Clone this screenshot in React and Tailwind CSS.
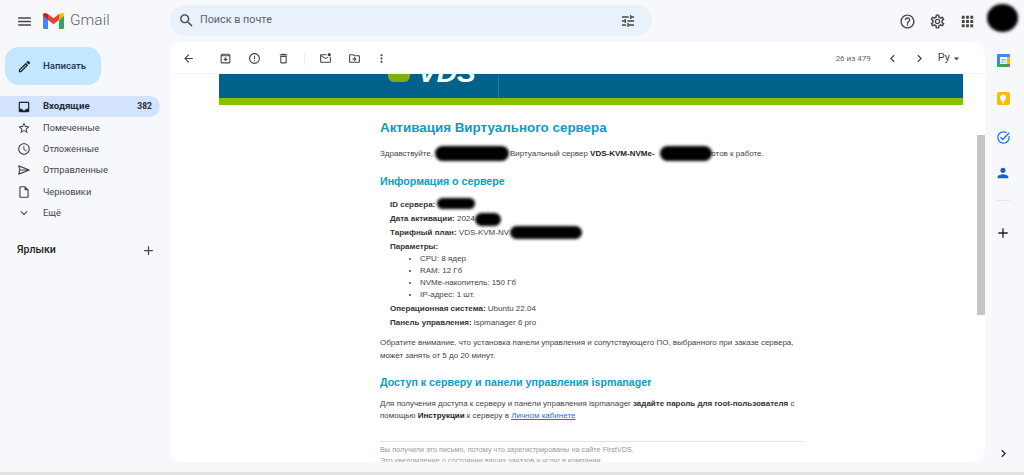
import {
  MdMenu, MdSearch, MdOutlineTune, MdHelpOutline, MdOutlineSettings, MdApps, MdOutlineEdit, MdInbox,
  MdStarBorder, MdOutlineWatchLater, MdOutlineInsertDriveFile, MdExpandMore, MdAdd,
  MdArrowBack, MdOutlineArchive, MdErrorOutline, MdOutlineDelete, MdOutlineMarkEmailUnread,
  MdOutlineDriveFileMove, MdMoreVert, MdChevronLeft, MdChevronRight, MdArrowDropDown, MdPerson,
  MdLightbulb, MdTaskAlt,
} from "react-icons/md";

const SentIcon = ({ size }) => (
  <svg width={size} height={size} viewBox="0 0 24 24" fill="none" stroke="currentColor" strokeWidth="2" strokeLinejoin="round">
    <path d="M3 5l18 7-18 7 2-7ZM5 12h16" />
  </svg>
);

const navItems = [
  { label: "Помеченные", Icon: MdStarBorder },
  { label: "Отложенные", Icon: MdOutlineWatchLater },
  { label: "Отправленные", Icon: SentIcon },
  { label: "Черновики", Icon: MdOutlineInsertDriveFile },
  { label: "Ещё", Icon: MdExpandMore },
];

const GmailLogo = () => (
  <svg width="21" height="16" viewBox="0 0 21 16">
    <path d="M0 2.5V14.5A1.5 1.5 0 0 0 1.5 16H5V7Z" fill="#4285f4" />
    <path d="M16 16H19.5A1.5 1.5 0 0 0 21 14.5V2.5L16 7Z" fill="#34a853" />
    <path d="M16 1V7L21 3V2C21 .2 19 -.6 17.6 .4Z" fill="#fbbc04" />
    <path d="M5 7V1L10.5 5.2 16 1V7L10.5 11.2Z" fill="#ea4335" />
    <path d="M0 2V3L5 7V1L3.4 .4C2 -.6 0 .2 0 2Z" fill="#c5221f" />
  </svg>
);

const CalendarIcon = () => (
  <svg width="13" height="13" viewBox="0 0 13 13">
    <rect width="13" height="13" rx="1" fill="#4285f4" />
    <rect x="3" y="3" width="7" height="7" fill="#fff" />
    <rect x="10" y="3" width="3" height="7" fill="#fbbc04" />
    <rect y="10" width="10" height="3" fill="#34a853" />
    <path d="M10 10h3l-3 3Z" fill="#ea4335" />
    <text x="6.5" y="8.6" fontSize="5" textAnchor="middle" fill="#1a73e8" fontFamily="Roboto, sans-serif">31</text>
  </svg>
);

const Blob = ({ className }) => (
  <span className={`absolute bg-black rounded-full blur-[1.5px] ${className}`} />
);

const Sidebar = () => (
  <aside className="w-[170px] shrink-0 pt-[5px]">
    <div className="ml-[5px] w-[96px] h-[38px] rounded-[14px] bg-[#c2e7ff] flex items-center pl-[12px] gap-[11px] text-[#17324d]">
      <MdOutlineEdit size={15} className="text-[#202124]" />
      <span className="text-[9.6px] font-medium">Написать</span>
    </div>
    <div className="mt-[11px] w-[160px] h-[21px] rounded-r-full bg-[#d3e3fd] flex items-center pl-[17px] pr-[8px] text-[9.6px] font-bold text-[#1f2b3a]">
      <MdInbox size={14} className="text-[#202124]" />
      <span className="ml-[12px] flex-1">Входящие</span>
      <span className="text-[8.5px]">382</span>
    </div>
    {navItems.map(({ label, Icon }) => (
      <div key={label} className="h-[21.3px] flex items-center pl-[17px] text-[9.3px] text-[#444746]">
        <Icon size={14} />
        <span className="ml-[12px]">{label}</span>
      </div>
    ))}
    <div className="mt-[19px] pl-[17px] pr-[14px] flex items-center justify-between text-[#1f1f1f]">
      <span className="text-[10.6px] font-medium">Ярлыки</span>
      <MdAdd size={15} className="text-[#444746]" />
    </div>
  </aside>
);

const Email = () => (
  <div className="flex-1 min-h-0 overflow-hidden relative font-['Liberation_Sans',sans-serif] text-[8px] leading-[14px] text-[#444]">
    <div className="ml-[49px] w-[744px] h-[31px] bg-[#00618a] border-b-[7px] border-[#84c200] overflow-hidden flex">
      <div className="w-[280px] relative border-r border-[#1c7ba3]">
        <span className="absolute left-[169px] -top-[12px] w-[22px] h-[20px] rounded-[6px] bg-[#7fae10]" />
        <span className="absolute left-[199px] -top-[15px] text-white text-[28px] leading-[28px] font-bold italic">VDS</span>
      </div>
    </div>
    <div className="ml-[210px] w-[424px]">
      <h1 className="mt-[14px] text-[13.4px] leading-[18px] font-bold text-[#0a9cc4]">Активация Виртуального сервера</h1>
      <p className="mt-[10px] relative">
        Здравствуйте,<span className="inline-block w-[77px]" />Виртуальный сервер <b className="text-[#222]">VDS-KVM-NVMe-</b>
        <span className="inline-block w-[54px]" />готов к работе.
        <Blob className="left-[55px] -top-[1px] w-[74px] h-[15px]" />
        <Blob className="left-[280px] -top-[1px] w-[52px] h-[15px]" />
      </p>
      <h2 className="mt-[12px] text-[10.66px] leading-[16px] font-bold text-[#0a9cc4]">Информация о сервере</h2>
      <div className="ml-[10px] mt-[9px] text-[#444]">
        <p className="relative"><b className="text-[#333]">ID сервера:</b><Blob className="left-[47px] top-0 w-[38px] h-[11px]" /></p>
        <p className="relative"><b className="text-[#333]">Дата активации:</b> 2024<Blob className="left-[85px] top-[1px] w-[26px] h-[13px]" /></p>
        <p className="relative"><b className="text-[#333]">Тарифный план:</b> VDS-KVM-NV<Blob className="left-[120px] top-0 w-[72px] h-[13px]" /></p>
        <p className="leading-[13px]"><b className="text-[#333]">Параметры:</b></p>
        <ul className="ml-[30px] list-disc leading-[12px]">
          <li>CPU: 8 ядер</li>
          <li>RAM: 12 Гб</li>
          <li>NVMe-накопитель: 150 Гб</li>
          <li>IP-адрес: 1 шт.</li>
        </ul>
        <p className="mt-[1px]"><b className="text-[#333]">Операционная система:</b> Ubuntu 22.04</p>
        <p><b className="text-[#333]">Панель управления:</b> ispmanager 6 pro</p>
      </div>
      <p className="mt-[6px] leading-[13px]">Обратите внимание, что установка панели управления и сопутствующего ПО, выбранного при заказе сервера, может занять от 5 до 20 минут.</p>
      <h2 className="mt-[12px] text-[10.66px] leading-[16px] font-bold text-[#0a9cc4]">Доступ к серверу и панели управления ispmanager</h2>
      <p className="mt-[8px] leading-[12px]">
        Для получения доступа к серверу и панели управления ispmanager <b className="text-[#333]">задайте пароль для root-пользователя</b> с помощью <b className="text-[#222]">Инструкции</b> к серверу в <a className="text-[#2a6fd0] underline">Личном кабинете</a>
      </p>
      <div className="mt-[19px] border-t border-[#e2e2e2] pt-[2px] text-[7.3px] leading-[11px] text-[#9a9a9a]">
        <p>Вы получили это письмо, потому что зарегистрированы на сайте FirstVDS.</p>
        <p>Это уведомление о состоянии ваших заказов и услуг в компании.</p>
      </div>
    </div>
    <div className="absolute right-0 top-[61px] w-[8px] h-[180px] bg-[#c4c4c4]" />
  </div>
);

export default function App() {
  return (
    <div className="h-[475px] w-[1024px] overflow-hidden bg-[#f6f8fc] flex flex-col font-['Roboto',sans-serif]">
      <header className="h-[42px] shrink-0 flex items-center relative">
        <div className="w-[170px] flex items-center pl-[16px]">
          <MdMenu size={17} className="text-[#444746]" />
          <span className="ml-[10px]"><GmailLogo /></span>
          <span className="ml-[6px] text-[15.5px] font-light text-[#5f6368]">Gmail</span>
        </div>
        <div className="w-[482px] h-[31px] -mt-[1px] rounded-full bg-[#e9f1fb] flex items-center pl-[8px] pr-[16px] text-[#444746]">
          <MdSearch size={17} />
          <span className="ml-[5px] flex-1 text-[10.8px] text-[#5f6368]">Поиск в почте</span>
          <MdOutlineTune size={16} />
        </div>
        <div className="ml-auto flex items-center pr-[48px] gap-[13px] text-[#444746]">
          <MdHelpOutline size={17} />
          <MdOutlineSettings size={17} />
          <MdApps size={17} />
        </div>
        <span className="absolute left-[987px] top-[4px] w-[31px] h-[28px] rounded-[50%] bg-black blur-[1.5px]" />
      </header>
      <div className="flex flex-1 min-h-0">
        <Sidebar />
        <main className="w-[815px] h-[420px] bg-white rounded-[14px] flex flex-col overflow-hidden">
          <div className="h-[32px] shrink-0 flex items-center text-[#444746] pr-[22px] pt-[2px] border-b border-[#f4f4f4]">
            <MdArrowBack size={13} className="ml-[12px]" />
            <MdOutlineArchive size={13} className="ml-[24px]" />
            <MdErrorOutline size={13} className="ml-[16px]" />
            <MdOutlineDelete size={13} className="ml-[16px]" />
            <span className="ml-[14px] w-px h-[12px] bg-[#eeeeee]" />
            <MdOutlineMarkEmailUnread size={13} className="ml-[14px]" />
            <MdOutlineDriveFileMove size={13} className="ml-[16px]" />
            <MdMoreVert size={13} className="ml-[14px]" />
            <span className="ml-auto text-[8px] text-[#5f6368]">26 из 479</span>
            <MdChevronLeft size={15} className="ml-[14px]" />
            <MdChevronRight size={15} className="ml-[12px]" />
            <span className="ml-[11px] text-[11px]">Ру</span>
            <MdArrowDropDown size={13} />
          </div>
          <Email />
        </main>
        <aside className="w-[39px] flex flex-col items-center relative pt-[12px] pr-[3px]">
          <CalendarIcon />
          <span className="mt-[25px] w-[13px] h-[13px] rounded-[2px] bg-[#fbbc04] flex items-center justify-center text-white"><MdLightbulb size={10} /></span>
          <MdTaskAlt size={15} className="mt-[25px] text-[#1a73e8]" />
          <MdPerson size={16} className="mt-[20px] text-[#1a5fd0]" />
          <span className="mt-[19px] w-[13px] h-px bg-[#e3e6ea]" />
          <MdAdd size={16} className="mt-[24px] text-[#202124]" />
          <MdChevronRight size={15} className="mt-auto mb-[11px] text-[#202124]" />
        </aside>
      </div>
      <div className="h-[3px] shrink-0 bg-[#dfe2e0]" />
    </div>
  );
}
